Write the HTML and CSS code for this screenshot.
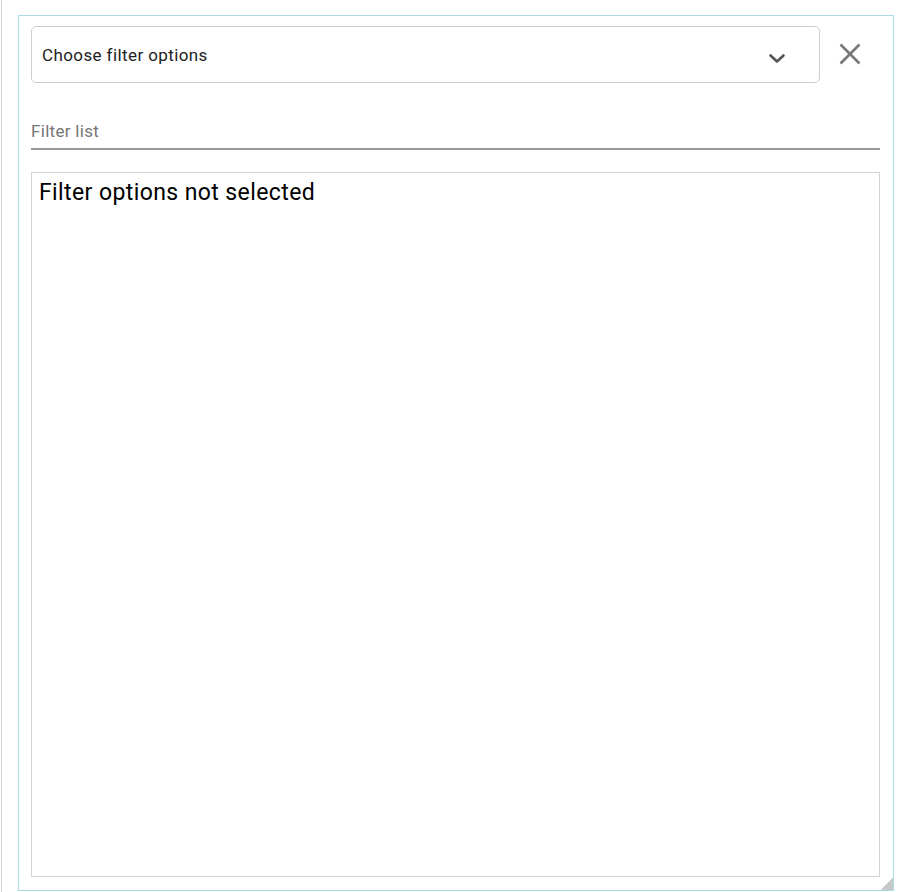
FILE: index.html
```html
<!DOCTYPE html>
<html lang="en">
<head>
<meta charset="utf-8">
<title>Filter</title>
<link rel="stylesheet" href="styles.css">
</head>
<body>
<div class="page">
  <div class="panel">
    <div class="top-row">
      <div class="select">
        <span class="select-text">Choose filter options</span>
        <svg class="chevron" width="18" height="12" viewBox="0 0 18 12" aria-hidden="true">
          <path d="M2.5 3.5 L9 9.5 L15.5 3.5" fill="none" stroke="#555" stroke-width="2.6" stroke-linecap="round" stroke-linejoin="round"/>
        </svg>
      </div>
      <button class="close" type="button" aria-label="Close">
        <svg width="22" height="22" viewBox="0 0 22 22" aria-hidden="true">
          <path d="M1.5 1.5 L20.5 20.5 M20.5 1.5 L1.5 20.5" fill="none" stroke="#777" stroke-width="2.6"/>
        </svg>
      </button>
    </div>
    <div class="field">Filter list</div>
    <div class="list">Filter options not selected</div>
  </div>
</div>
</body>
</html>
```
FILE: styles.css
```css
* { box-sizing: border-box; }
html, body { margin: 0; padding: 0; background: #fff; }
body {
  font-family: Roboto, "Liberation Sans", Arial, sans-serif;
  color: #222;
}
.page {
  margin-left: 1px;
  border-left: 1px solid #d3d3d3;
  height: 892px;
  padding-top: 15px;
  padding-left: 16px;
}
.panel {
  position: relative;
  width: 876px;
  height: 876px;
  border: 1px solid #add8e6;
  padding: 10px 12px 0 12px;
}
.panel::after {
  content: "";
  position: absolute;
  right: 0;
  bottom: 0;
  width: 13px;
  height: 13px;
  background: linear-gradient(to bottom right, transparent 50%, #c8c8c8 50%);
}
.top-row {
  display: flex;
  align-items: center;
}
.select {
  flex: 0 0 789px;
  height: 57px;
  border: 1px solid #cfcfcf;
  border-radius: 5px;
  display: flex;
  align-items: center;
  justify-content: space-between;
  padding: 0 33px 0 10px;
}
.select-text {
  font-size: 17px;
  letter-spacing: 0.4px;
  color: #222;
}
.chevron { margin-top: 6px; }
.close {
  flex: 0 0 60px;
  height: 57px;
  border: 0;
  background: transparent;
  padding: 0;
  display: flex;
  align-items: center;
  justify-content: center;
  margin-top: -1px;
}
.field {
  padding-top: 39px;
  padding-bottom: 7px;
  line-height: 19px;
  font-size: 17px;
  letter-spacing: 0.3px;
  color: #777;
  border-bottom: 2px solid #999;
  width: 849px;
}
.list {
  margin-top: 22px;
  width: 849px;
  height: 705px;
  border: 1px solid #d3d3d3;
  padding: 6px 7px;
  font-size: 23px;
  letter-spacing: 0.4px;
  color: #000;
}
```
